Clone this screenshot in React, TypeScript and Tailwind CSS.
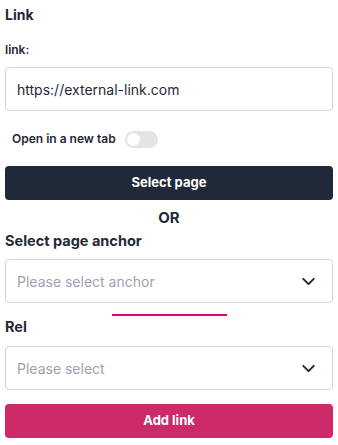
import { ChevronDown } from 'lucide-react';

const SelectBox = ({ placeholder }: { placeholder: string }) => (
  <div className="flex h-[44px] items-center justify-between rounded-[4px] border border-[#d4d4d8] bg-white pr-[13px] pl-[11px]">
    <span className="text-[14px] text-[#9ca3af]">{placeholder}</span>
    <ChevronDown size={21} strokeWidth={2.25} className="text-[#1f2937]" />
  </div>
);

export default function App() {
  return (
    <div
      className="min-h-[445px] bg-white bg-[radial-gradient(#f1f1f4_0.6px,transparent_0.7px)] bg-[size:6px_6px] px-[5px] pt-[5px] text-[#1f2937]"
      style={{ fontFamily: 'Inter, "Noto Sans", sans-serif' }}
    >
      <h2 className="text-[14px] leading-[20px] font-bold">Link</h2>

      <label className="mt-[17px] block text-[12px] leading-4 font-semibold">link:</label>
      <div className="mt-[9px] flex h-[44px] items-center rounded-[4px] border border-[#d4d4d8] bg-white px-[11px] text-[14px]">
        https://external-link.com
      </div>

      <div className="mt-[19px] flex h-[18px] items-center gap-[9px] pl-[7px]">
        <span className="text-[12px] font-semibold">Open in a new tab</span>
        <div className="flex h-[17px] w-[33px] items-center rounded-full bg-[#e4e4e7] px-[2px]">
          <div className="h-[13px] w-[13px] rounded-full bg-white" />
        </div>
      </div>

      <button className="mt-[18px] flex h-[34px] w-full items-center justify-center rounded-[4px] bg-[#1f2937] text-[13px] font-bold text-white">
        Select page
      </button>

      <div className="mt-[8px] text-center text-[15px] leading-5 font-bold">OR</div>

      <h3 className="mt-[3px] text-[14.5px] leading-5 font-bold">Select page anchor</h3>
      <div className="mt-[8px]">
        <SelectBox placeholder="Please select anchor" />
      </div>

      <div className="mt-[11px] ml-[107px] h-[2px] w-[115px] bg-pink-600" />

      <h3 className="mt-[1px] text-[14.5px] leading-5 font-bold">Rel</h3>
      <div className="mt-[9px]">
        <SelectBox placeholder="Please select" />
      </div>

      <button className="mt-[14px] flex h-[34px] w-full items-center justify-center rounded-[4px] bg-[#cc2a69] text-[13px] font-bold text-white">
        Add link
      </button>
    </div>
  );
}
